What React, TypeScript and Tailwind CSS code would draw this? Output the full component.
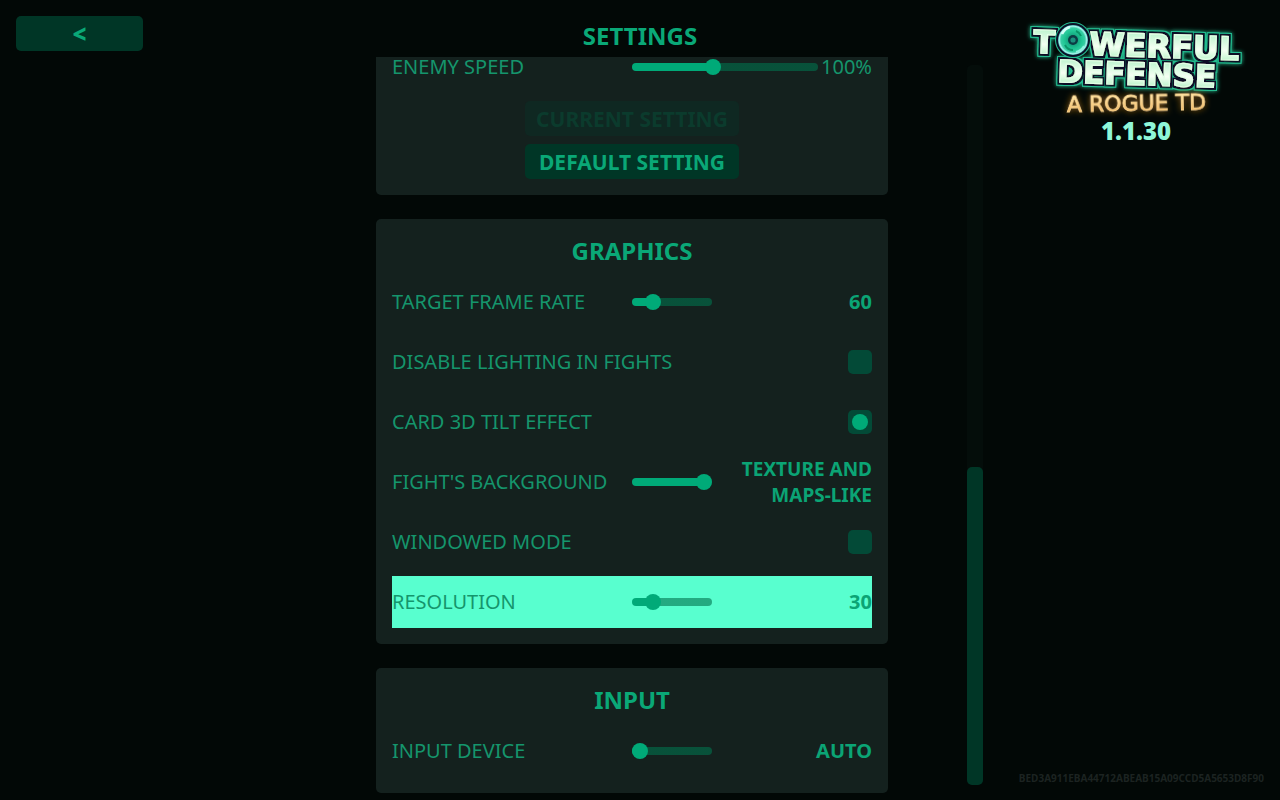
import { useId, useState, type CSSProperties } from "react";

type SliderProps = {
  id: string;
  value: number;
  max: number;
  className?: string;
};

function Slider({ id, value, max, className = "w-20" }: SliderProps) {
  const [current, setCurrent] = useState(value);
  const ratio = current / max;
  const style = { "--fill": `calc(8px + (100% - 16px) * ${ratio})` } as CSSProperties;
  return (
    <input
      id={id}
      type="range"
      min={0}
      max={max}
      value={current}
      onChange={(e) => setCurrent(Number(e.target.value))}
      style={style}
      className={`${className} block h-4 shrink-0 cursor-pointer appearance-none bg-transparent outline-none [&::-webkit-slider-runnable-track]:h-2 [&::-webkit-slider-runnable-track]:rounded-full [&::-webkit-slider-runnable-track]:bg-[linear-gradient(to_right,#00aa78_var(--fill),#00724d99_var(--fill))] [&::-webkit-slider-thumb]:-mt-1 [&::-webkit-slider-thumb]:size-4 [&::-webkit-slider-thumb]:appearance-none [&::-webkit-slider-thumb]:rounded-full [&::-webkit-slider-thumb]:bg-[#00aa78]`}
    />
  );
}

type SliderRowProps = {
  label: string;
  value: number;
  max: number;
  text: string;
  active?: boolean;
};

function SliderRow({ label, value, max, text, active = false }: SliderRowProps) {
  const id = useId();
  const size = text.length > 8 ? "text-[19px]" : "text-xl";
  return (
    <div
      className={`grid h-13 grid-cols-[1fr_80px_160px] items-center ${active ? "bg-[#58ffcf]" : ""}`}
    >
      <label htmlFor={id} className="text-[#15956c]">
        {label}
      </label>
      <Slider id={id} value={value} max={max} />
      <output htmlFor={id} className={`${size} pl-4 text-right leading-[26px] font-bold text-[#0ba475]`}>
        {text}
      </output>
    </div>
  );
}

function CheckRow({ label, checked = false }: { label: string; checked?: boolean }) {
  const id = useId();
  return (
    <div className="flex h-13 items-center justify-between">
      <label htmlFor={id} className="text-[#15956c]">
        {label}
      </label>
      <input
        id={id}
        type="checkbox"
        defaultChecked={checked}
        className="grid size-6 cursor-pointer appearance-none place-items-center rounded-[5px] bg-[#034a37] before:size-4 before:rounded-full checked:before:bg-[#00aa78]"
      />
    </div>
  );
}

function Panel({ title, children }: { title: string; children: React.ReactNode }) {
  return (
    <section className="flex flex-col gap-2 rounded-[5px] bg-[#14211e] p-4">
      <h2 className="pb-0.5 text-center text-2xl leading-[31px] font-bold text-[#0aa877]">{title}</h2>
      {children}
    </section>
  );
}

function Logo() {
  return (
    <svg viewBox="0 0 240 108" className="h-27 w-60" role="img" aria-label="Towerful Defense, a rogue TD">
      <defs>
        <linearGradient id="letters" x1="0" y1="0" x2="0" y2="1">
          <stop offset="0.2" stopColor="#c3f5d2" />
          <stop offset="0.55" stopColor="#f5fff3" />
          <stop offset="0.85" stopColor="#b8f3c8" />
        </linearGradient>
        <linearGradient id="gold" x1="0" y1="0" x2="0" y2="1">
          <stop offset="0.2" stopColor="#ffe9ae" />
          <stop offset="0.8" stopColor="#f3b765" />
        </linearGradient>
        <radialGradient id="disc">
          <stop offset="0.25" stopColor="#139f7b" />
          <stop offset="0.6" stopColor="#20c795" />
          <stop offset="0.8" stopColor="#36cda3" />
          <stop offset="0.92" stopColor="#a8f7ee" />
          <stop offset="1" stopColor="#4aaeb0" />
        </radialGradient>
        <filter id="outline" x="-10%" y="-20%" width="120%" height="140%">
          <feMorphology in="SourceAlpha" operator="dilate" radius="3" result="wide" />
          <feFlood floodColor="#25bd91" />
          <feComposite in2="wide" operator="in" result="rim" />
          <feGaussianBlur in="rim" stdDeviation="2" result="glow" />
          <feMorphology in="SourceAlpha" operator="dilate" radius="2" result="narrow" />
          <feFlood floodColor="#0b1027" />
          <feComposite in2="narrow" operator="in" result="dark" />
          <feMerge>
            <feMergeNode in="glow" />
            <feMergeNode in="rim" />
            <feMergeNode in="dark" />
            <feMergeNode in="SourceGraphic" />
          </feMerge>
        </filter>
        <filter id="goldGlow" x="-10%" y="-60%" width="120%" height="220%">
          <feDropShadow dx="0" dy="0" stdDeviation="3" floodColor="#c07a18" floodOpacity="0.8" />
        </filter>
      </defs>
      <g
        filter="url(#outline)"
        fill="url(#letters)"
        stroke="#e2ffe6"
        strokeWidth="1.2"
        fontFamily="'DejaVu Sans', sans-serif"
        fontWeight="700"
      >
        <g transform="rotate(2 17 42)">
          <text x="17" y="41" fontSize="32">T</text>
          <text x="73" y="41" fontSize="32">WERFUL</text>
        </g>
        <text x="41" y="70" fontSize="31" transform="rotate(2 41 70)">DEFENSE</text>
      </g>
      <circle cx="57" cy="28" r="18" fill="#25bd91" />
      <circle cx="57" cy="28" r="17" fill="#0b1027" />
      <circle cx="57" cy="28" r="15" fill="url(#disc)" />
      <path d="M46 22a13 13 0 0 1 8-7" fill="none" stroke="#d3fff8" strokeWidth="2.5" />
      <path d="M68 34a13 13 0 0 1-8 6" fill="none" stroke="#8ef3df" strokeWidth="2" />
      <path d="M49 33a9 9 0 0 0 8 5M65 24a9 9 0 0 0-5-5" fill="none" stroke="#0b9468" strokeWidth="2" />
      <circle cx="57" cy="28" r="5" fill="#0c3b43" />
      <circle cx="57" cy="28" r="2.6" fill="#1b8f7d" />
      <text
        x="51"
        y="100"
        fontSize="22"
        fontFamily="'DejaVu Sans', sans-serif"
        fill="url(#gold)"
        stroke="#fbd48b"
        strokeWidth="0.8"
        filter="url(#goldGlow)"
        transform="rotate(-1 51 100)"
      >
        A ROGUE TD
      </text>
    </svg>
  );
}

export default function App() {
  return (
    <div className="grid h-screen grid-cols-[1fr_minmax(0,686px)_1fr] overflow-hidden bg-[#020806] font-['Noto_Sans',sans-serif] text-xl leading-[26px]">
      <nav className="p-4">
        <button
          type="button"
          aria-label="Back"
          className="h-[35px] w-[127px] cursor-pointer rounded-[5px] bg-[#003626] text-2xl font-black text-[#0aa877]"
        >
          &lt;
        </button>
      </nav>

      <main className="flex min-h-0 flex-col pb-2">
        <h1 className="pt-5 pb-1.5 text-center text-2xl leading-[31px] font-bold text-[#0aa877]">SETTINGS</h1>
        <div className="flex min-h-0 flex-1">
          <div className="flex min-w-0 flex-1 flex-col items-center">
            <div className="flex w-full max-w-lg flex-col gap-6">
              <section className="flex flex-col items-center gap-6 rounded-b-[5px] bg-[#14211e] px-4 pb-4">
                <div className="grid h-5 w-full grid-cols-[1fr_186px_54px] items-center leading-5 text-[#15956c]">
                  <label htmlFor="enemy-speed">ENEMY SPEED</label>
                  <Slider id="enemy-speed" value={43} max={100} className="w-full" />
                  <output htmlFor="enemy-speed" className="text-right">100%</output>
                </div>
                <div className="flex w-[214px] flex-col gap-2 text-[21px] font-bold">
                  <button type="button" disabled className="h-[35px] rounded-[5px] bg-[#0f2822] text-[#0b3b2d]">
                    CURRENT SETTING
                  </button>
                  <button
                    type="button"
                    className="h-[35px] cursor-pointer rounded-[5px] bg-[#003626] text-[#0aa877]"
                  >
                    DEFAULT SETTING
                  </button>
                </div>
              </section>

              <Panel title="GRAPHICS">
                <SliderRow label="TARGET FRAME RATE" value={1} max={5} text="60" />
                <CheckRow label="DISABLE LIGHTING IN FIGHTS" />
                <CheckRow label="CARD 3D TILT EFFECT" checked />
                <SliderRow label="FIGHT'S BACKGROUND" value={2} max={2} text="TEXTURE AND MAPS-LIKE" />
                <CheckRow label="WINDOWED MODE" />
                <SliderRow label="RESOLUTION" value={1} max={5} text="30" active />
              </Panel>

              <Panel title="INPUT">
                <SliderRow label="INPUT DEVICE" value={0} max={2} text="AUTO" />
              </Panel>
            </div>
          </div>
          <div className="mt-2 mb-[7px] flex w-4 flex-col justify-end rounded-[5px] bg-[#040d0a]">
            <div className="h-[318px] rounded-[5px] bg-[#003626]" />
          </div>
        </div>
      </main>

      <aside className="flex flex-col justify-between pt-3 pb-4">
        <div className="flex flex-col items-center self-end pr-6">
          <Logo />
          <p className="text-2xl leading-[22px] font-black text-[#8ff7d8]">1.1.30</p>
        </div>
        <p className="pr-4 text-right text-[10px] leading-3 font-bold text-[#1c2321]">
          BED3A911EBA44712ABEAB15A09CCD5A5653D8F90
        </p>
      </aside>
    </div>
  );
}
